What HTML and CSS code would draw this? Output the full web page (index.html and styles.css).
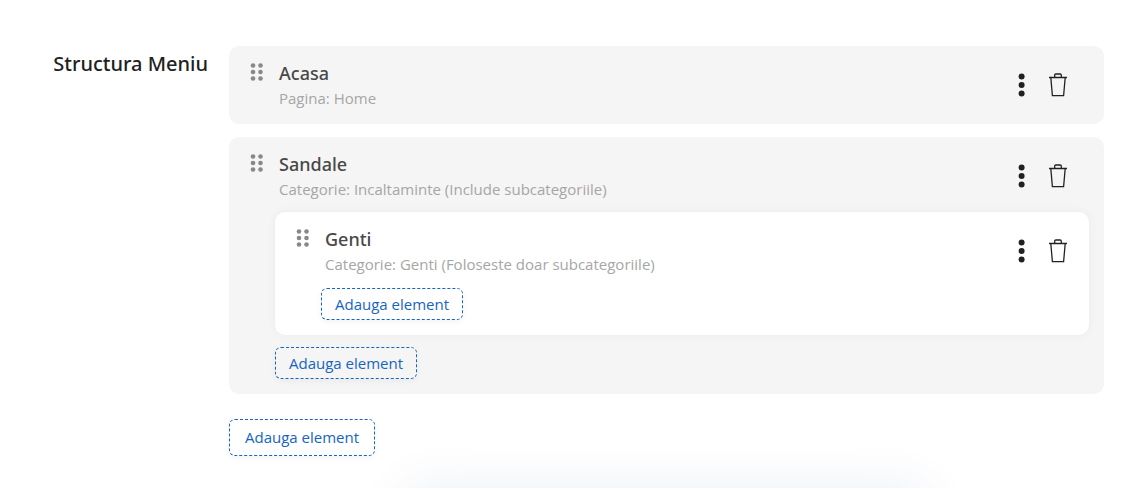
FILE: index.html
```html
<!DOCTYPE html>
<html lang="ro">
  <head>
    <meta charset="utf-8">
    <meta name="viewport" content="width=device-width, initial-scale=1">
    <title>Structura Meniu</title>
    <link rel="stylesheet" href="styles.css">
  </head>
  <body>
    <svg class="sprite" aria-hidden="true">
      <symbol id="grip" viewBox="0 0 14 20">
        <circle cx="3" cy="3.5" r="2.3"/><circle cx="10.5" cy="3.5" r="2.3"/>
        <circle cx="3" cy="10" r="2.3"/><circle cx="10.5" cy="10" r="2.3"/>
        <circle cx="3" cy="16.5" r="2.3"/><circle cx="10.5" cy="16.5" r="2.3"/>
      </symbol>
      <symbol id="dots" viewBox="0 0 8 24">
        <circle cx="3.6" cy="3.6" r="3"/><circle cx="3.6" cy="12" r="3"/><circle cx="3.6" cy="20.4" r="3"/>
      </symbol>
      <symbol id="trash" viewBox="0 0 20 24">
        <path d="M1 4.5h18M6.7 4.5V2.2q0-1.2 1.2-1.2h4.2q1.2 0 1.2 1.2v2.3M2.8 4.5l1.6 18.2h11.2l1.6-18.2" fill="none" stroke="currentColor" stroke-width="1.3"/>
      </symbol>
    </svg>
    <main class="menu-structure">
      <h1 class="menu-label">Structura Meniu</h1>
      <div class="menu-content">
        <ul class="menu-list">
          <li class="item">
            <div class="item-head">
              <svg class="grip"><use href="#grip"/></svg>
              <div class="item-text">
                <h2 class="item-title">Acasa</h2>
                <p class="item-info">Pagina: Home</p>
              </div>
              <button type="button" class="icon-button" aria-label="Optiuni Acasa"><svg class="dots"><use href="#dots"/></svg></button>
              <button type="button" class="icon-button" aria-label="Sterge Acasa"><svg class="trash"><use href="#trash"/></svg></button>
            </div>
          </li>
          <li class="item">
            <div class="item-head">
              <svg class="grip"><use href="#grip"/></svg>
              <div class="item-text">
                <h2 class="item-title">Sandale</h2>
                <p class="item-info">Categorie: Incaltaminte (Include subcategoriile)</p>
              </div>
              <button type="button" class="icon-button" aria-label="Optiuni Sandale"><svg class="dots"><use href="#dots"/></svg></button>
              <button type="button" class="icon-button" aria-label="Sterge Sandale"><svg class="trash"><use href="#trash"/></svg></button>
            </div>
            <div class="item-children">
              <ul class="menu-list">
                <li class="item item-nested">
                  <div class="item-head">
                    <svg class="grip"><use href="#grip"/></svg>
                    <div class="item-text">
                      <h2 class="item-title">Genti</h2>
                      <p class="item-info">Categorie: Genti (Foloseste doar subcategoriile)</p>
                    </div>
                    <button type="button" class="icon-button" aria-label="Optiuni Genti"><svg class="dots"><use href="#dots"/></svg></button>
                    <button type="button" class="icon-button" aria-label="Sterge Genti"><svg class="trash"><use href="#trash"/></svg></button>
                  </div>
                  <div class="item-children">
                    <button type="button" class="add-button">Adauga element</button>
                  </div>
                </li>
              </ul>
              <button type="button" class="add-button">Adauga element</button>
            </div>
          </li>
        </ul>
        <button type="button" class="add-button add-button-main">Adauga element</button>
      </div>
    </main>
    <div class="bottom-shadow"></div>
  </body>
</html>
```

FILE: styles.css
```css
* {
  box-sizing: border-box;
}

body {
  margin: 0;
  background: #fff;
  font-family: "Open Sans", sans-serif;
  font-size: 15px;
  color: #212121;
}

h1, h2, p, ul {
  margin: 0;
  padding: 0;
}

.sprite {
  display: none;
}

.menu-structure {
  display: grid;
  grid-template-columns: 208px minmax(0, 1fr);
  column-gap: 21px;
  padding: 46px 43px 32px 0;
}

.menu-label {
  padding-top: 4px;
  font-family: "Noto Sans", "Open Sans", sans-serif;
  font-size: 20px;
  font-weight: 500;
  line-height: 28px;
  text-align: right;
}

.menu-list {
  display: grid;
  gap: 13px;
  list-style: none;
}

.item {
  border-radius: 10px;
  background: #f5f5f5;
}

.item-head {
  display: flex;
  align-items: center;
  padding: 14px 36px 14px 21px;
}

.item-nested {
  background: #fff;
  box-shadow: 0 0 10px rgba(0, 0, 0, 0.05);
}

.item-nested .item-head {
  padding-right: 21px;
}

.item-text {
  flex: 1;
  margin-left: 15px;
}

.item-title {
  font-family: "Noto Sans", "Open Sans", sans-serif;
  font-size: 18px;
  font-weight: 500;
  line-height: 26px;
  color: #484848;
}

.item-info {
  line-height: 24px;
  color: #a6a6a6;
}

.item-children {
  margin-top: -3px;
  padding: 0 15px 15px 46px;
}

.item-children .menu-list {
  margin-bottom: 12px;
}

.item-nested .item-children {
  margin-top: -2px;
}

.grip {
  align-self: flex-start;
  width: 14px;
  height: 20px;
  margin-top: 2px;
  fill: #888;
}

.icon-button {
  display: flex;
  margin-left: 22px;
  padding: 0;
  border: 0;
  background: none;
  color: #212121;
  cursor: pointer;
}

.dots {
  width: 8px;
  height: 24px;
  fill: currentColor;
}

.trash {
  width: 20px;
  height: 24px;
}

.add-button {
  display: block;
  height: 32px;
  padding: 0 13px;
  border: 1px dashed #1565c0;
  border-radius: 6px;
  background: transparent;
  box-shadow: 0 2px 6px rgba(0, 0, 0, 0.05);
  font: inherit;
  color: #1565c0;
  cursor: pointer;
}

.add-button-main {
  height: 37px;
  margin-top: 25px;
  padding: 0 15px 2px;
}

/* shadow rising from the bottom of the window */
.bottom-shadow {
  position: fixed;
  bottom: -50px;
  left: 36%;
  right: 20%;
  height: 40px;
  border-radius: 10px;
  box-shadow: 0 0 50px 8px rgba(63, 90, 160, 0.11);
}
```
